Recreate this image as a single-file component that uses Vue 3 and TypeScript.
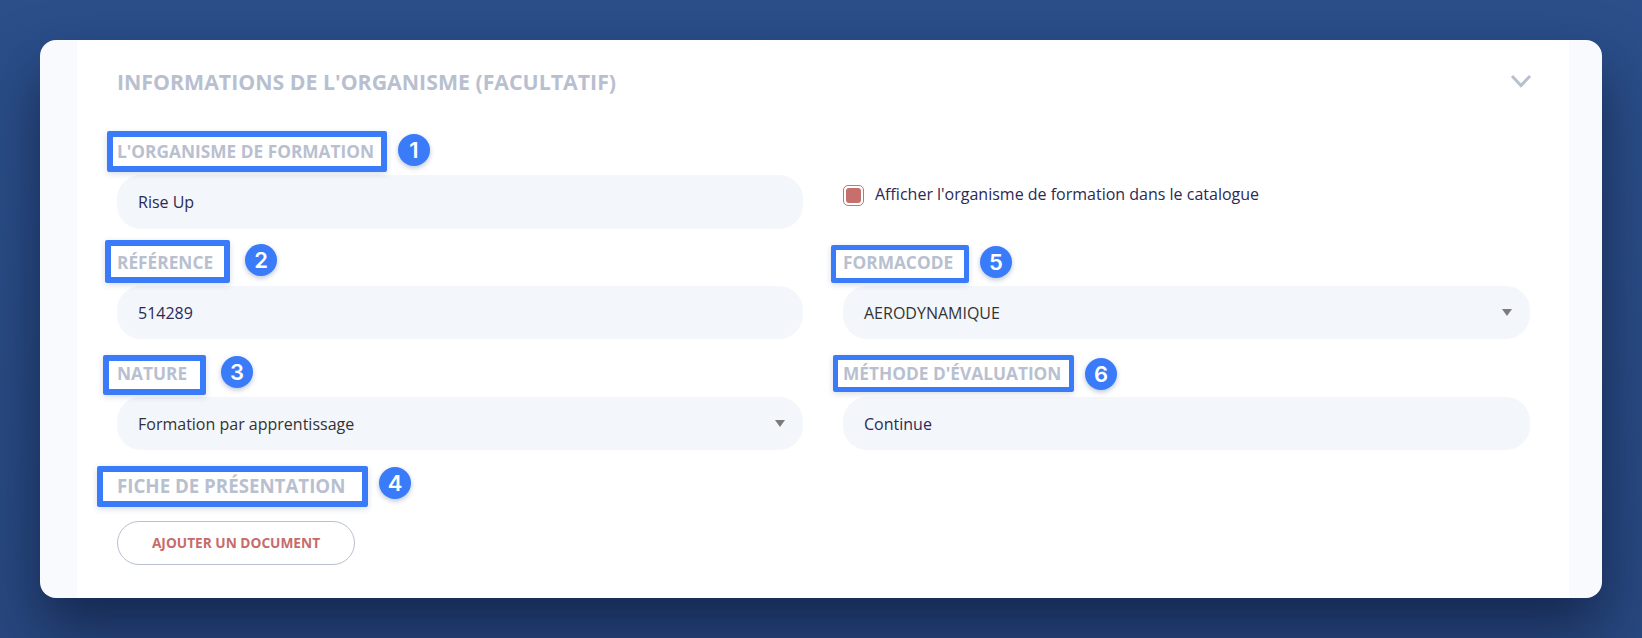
<template>
  <div class="page">
    <section class="card">
      <div class="panel">
        <header class="panel-header">
          <h2 class="panel-title">Informations de l'organisme (facultatif)</h2>
          <svg class="chevron" width="22" height="14" viewBox="0 0 22 14">
            <path d="M2 2 L11 11.5 L20 2" fill="none" stroke="#b8c0d0" stroke-width="3" />
          </svg>
        </header>

        <div class="form-grid">
          <template v-for="field in fields" :key="field.label">
            <div class="field">
              <label class="field-label">
                {{ field.label }}
                <span class="mark" :class="{ 'mark-thin': field.num > 4 }" :style="markStyle(field.mark)"></span>
                <span class="badge" :style="{ left: field.badge[0] + 'px', top: field.badge[1] + 'px' }">{{ field.num }}</span>
              </label>
              <div class="control">
                <span :class="{ 'select-value': field.select }">{{ field.value }}</span>
                <svg v-if="field.select" class="caret" width="10" height="7" viewBox="0 0 10 7">
                  <polygon points="0,0 10,0 5,7" fill="#7b7b7b" />
                </svg>
              </div>
            </div>
            <div v-if="field.num === 1" class="check-row">
              <span class="checkbox"><span class="checkbox-fill"></span></span>
              <span class="check-text">Afficher l'organisme de formation dans le catalogue</span>
            </div>
          </template>

          <div class="field field-doc">
            <label class="field-label">
              Fiche de présentation
              <span class="mark" :style="markStyle([-20, -9, 271, 41])"></span>
              <span class="badge" :style="{ left: '262px', top: '-8px' }">4</span>
            </label>
            <button class="add-button" type="button">Ajouter un document</button>
          </div>
        </div>
      </div>
    </section>
  </div>
</template>

<script setup lang="ts">
interface Field {
  num: number;
  label: string;
  value: string;
  select: boolean;
  mark: number[];
  badge: number[];
}

const fields: Field[] = [
  { num: 1, label: "L'organisme de formation", value: 'Rise Up', select: false, mark: [-10, -10, 280, 41], badge: [281, -7] },
  { num: 2, label: 'Référence', value: '514289', select: false, mark: [-12, -12, 125, 43], badge: [128, -8] },
  { num: 5, label: 'Formacode', value: 'AERODYNAMIQUE', select: true, mark: [-12, -7, 138, 38], badge: [137, -6] },
  { num: 3, label: 'Nature', value: 'Formation par apprentissage', select: true, mark: [-14, -8, 103, 40], badge: [104, -7] },
  { num: 6, label: "Méthode d'évaluation", value: 'Continue', select: false, mark: [-10, -8, 241, 37], badge: [242, -5] }
];

// annotation frame around a label: left, top, width, height
function markStyle(mark: number[]) {
  return {
    left: mark[0] + 'px',
    top: mark[1] + 'px',
    width: mark[2] + 'px',
    height: mark[3] + 'px'
  };
}
</script>

<style>
html,
body {
  margin: 0;
  background: #2a4c87;
}
</style>

<style scoped>
.page {
  height: 638px;
  box-sizing: border-box;
  padding: 40px 40px 40px 40px;
  overflow: hidden;
  background: linear-gradient(180deg, #2b4f8a 0%, #28487f 100%);
  font-family: 'Open Sans', sans-serif;
}

.card {
  height: 557.5px;
  padding: 0 33px 0 37px;
  background: #f9fafd;
  border-radius: 16px;
  box-shadow: 0 30px 60px rgba(10, 20, 50, 0.62);
}

.panel {
  height: 100%;
  box-sizing: border-box;
  padding: 27px 38px 0 40px;
  background: #fff;
}

.panel-header {
  display: flex;
  justify-content: space-between;
  align-items: center;
  height: 28px;
  margin-bottom: 46px;
}

.panel-title {
  margin: 0;
  font-size: 21.3px;
  font-weight: 700;
  text-transform: uppercase;
  color: #b8c0d0;
}

.chevron {
  margin-right: -1px;
}

.form-grid {
  display: grid;
  grid-template-columns: 686px 687px;
  column-gap: 40px;
  row-gap: 23.4px;
}

.field-label {
  position: relative;
  display: block;
  width: max-content;
  height: 22px;
  line-height: 22px;
  margin-bottom: 12px;
  font-size: 17.3px;
  font-weight: 700;
  text-transform: uppercase;
  color: #b8c0d0;
}

.mark {
  position: absolute;
  box-sizing: border-box;
  border: 6px solid #3a7bfa;
  border-radius: 2px;
  box-shadow: 0 2px 6px rgba(40, 70, 130, 0.18);
}

.mark-thin {
  border-width: 5px;
}

.badge {
  position: absolute;
  width: 32px;
  height: 32px;
  border-radius: 50%;
  background: #3a7bfa;
  box-shadow: 0 2px 5px rgba(30, 60, 120, 0.3);
  color: #fff;
  font-family: Inter, sans-serif;
  font-size: 22px;
  font-weight: 600;
  line-height: 32px;
  text-align: center;
}

.control {
  display: flex;
  justify-content: space-between;
  align-items: center;
  height: 53.5px;
  padding: 0 18px 0 21px;
  box-sizing: border-box;
  border-radius: 24px;
  background: #f3f6fb;
  font-size: 16px;
  color: #2b2a55;
}

.select-value {
  color: #333;
}

.check-row {
  align-self: end;
  display: flex;
  align-items: center;
  gap: 11px;
  margin-bottom: 23px;
}

.checkbox {
  display: block;
  box-sizing: border-box;
  width: 21px;
  height: 21px;
  padding: 2px;
  border: 1px solid #cb7370;
  border-radius: 5px;
}

.checkbox-fill {
  display: block;
  height: 100%;
  border-radius: 3px;
  background: #c76f6c;
}

.check-text {
  margin-top: -3px;
  font-size: 16px;
  color: #2b2a55;
}

.field-doc .field-label {
  font-size: 18.7px;
  margin-bottom: 24px;
}

.field-doc {
  grid-column: 1;
  margin-top: 1px;
}

.add-button {
  display: block;
  width: 238px;
  height: 44px;
  border: 1px solid #b8c0d0;
  border-radius: 22px;
  background: #fff;
  font-family: inherit;
  font-size: 13.7px;
  font-weight: 700;
  text-transform: uppercase;
  color: #c76b6b;
}
</style>
